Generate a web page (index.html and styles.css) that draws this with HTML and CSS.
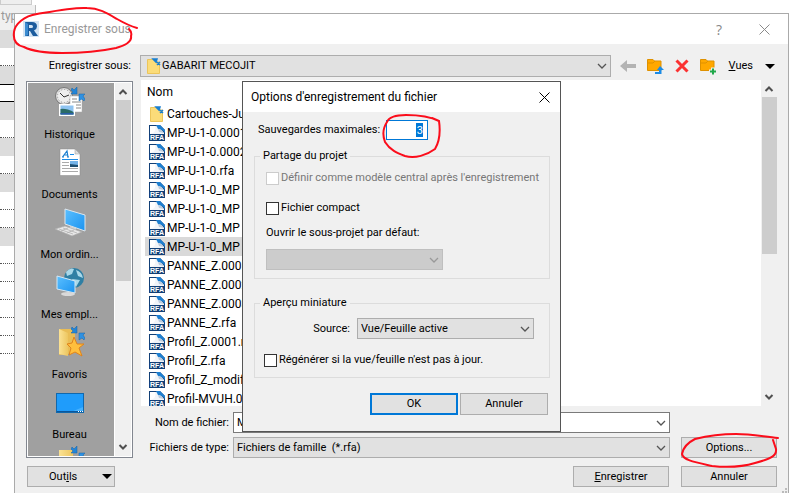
FILE: index.html
```
<!DOCTYPE html>
<html lang="fr">
<head>
    <meta charset="UTF-8">
    <meta name="viewport" content="width=device-width, initial-scale=1.0">
    <title>Enregistrer sous</title>
    <link rel="stylesheet" href="styles.css">
</head>
<body>
    <!-- shared icons -->
    <svg width="0" height="0" class="defs" aria-hidden="true">
        <defs>
            <linearGradient id="screen" x1="0" y1="0" x2="1" y2="1">
                <stop offset="0" stop-color="#5cc0ff"/>
                <stop offset="1" stop-color="#1b93f0"/>
            </linearGradient>
            <linearGradient id="folderFill" x1="0" y1="0" x2="1" y2="0">
                <stop offset="0" stop-color="#fbe294"/>
                <stop offset="1" stop-color="#edc660"/>
            </linearGradient>
            <symbol id="rfa" viewBox="0 0 16 16">
                <path d="M0 0H11L16 5V16H0Z" fill="#123f76"/>
                <path d="M1 1H9L15 8V9H1Z" fill="#f1f4f8"/>
                <path d="M1 9C6 8 7 5 6 1H1Z" fill="#fff"/>
                <path d="M7 0H11L16 5V8C14 5 11 4 9 4Z" fill="#1e7fd0"/>
                <path d="M9 4C11 4 13 5 15 8L10 7Z" fill="#bccbdc"/>
                <text x="8" y="15" text-anchor="middle" class="rfa-text">RFA</text>
            </symbol>
            <symbol id="folder" viewBox="0 0 16 16">
                <path d="M1.500 1.500H10V4H13.500V15.500H1.500Z" fill="#fbdc79" stroke="#ecc55a"/>
                <path d="M7 1L11 1L10 4ZM11 4L14 7M11 7L14 4" fill="#1a7fd0" stroke="#1a7fd0" stroke-width="1.500"/>
            </symbol>
            <symbol id="chevron" viewBox="0 0 10 6">
                <path d="M1 1L5 5L9 1" fill="none" stroke="currentColor" stroke-width="1.3"/>
            </symbol>
            <symbol id="chevronBold" viewBox="0 0 10 6">
                <path d="M1.500 1L5 4.500L8.500 1" fill="none" stroke="currentColor" stroke-width="2"/>
            </symbol>
            <symbol id="arrows" viewBox="0 0 14 15">
                <path d="M1 1L3 3L6 0V7H0L2 5L0 3Z" fill="#2385d8" stroke="#1464ab" stroke-width=".5"/>
                <path d="M13 14L11 12L8 14V7H14L12 9L14 12Z" fill="#2f91e2" stroke="#1464ab" stroke-width=".5"/>
            </symbol>
        </defs>
    </svg>

    <!-- property table of the window behind -->
    <div class="backdrop">
        <div class="bd-tab"></div>
        <div class="bd-head">type</div>
        <div class="bd-row grey"></div>
        <div class="bd-row dotted"></div>
        <div class="bd-row grey line"></div>
        <div class="bd-row line short"></div>
        <div class="bd-row grey"></div>
        <div class="bd-row dotted"></div>
        <div class="bd-row grey"></div>
        <div class="bd-row dotted"></div>
        <div class="bd-row grey"></div>
        <div class="bd-row dotted"></div>
        <div class="bd-row dotted"></div>
        <div class="bd-row grey"></div>
        <div class="bd-row dotted"></div>
        <div class="bd-row dotted"></div>
        <div class="bd-row dotted"></div>
        <div class="bd-row dotted"></div>
        <div class="bd-row dotted"></div>
        <div class="bd-row dotted"></div>
    </div>

    <main class="dialog">
        <header class="titlebar">
            <svg class="logo" width="16" height="16" viewBox="0 0 16 16">
                <rect width="16" height="16" fill="#d3e4f3"/>
                <path d="M2 1H9Q14 1 14 5.500Q14 8 11 9.500L15 15H10L7 10H6V15H2Z" fill="#1b5c9e"/>
                <path d="M6 4H8.500Q10 4 10 5.500Q10 7 8.500 7H6Z" fill="#d3e4f3"/>
                <path d="M2 1L5 3V14L2 15Z" fill="#3a8bd0"/>
            </svg>
            <h1>Enregistrer sous</h1>
            <button class="plain help" aria-label="Aide">?</button>
            <button class="plain" aria-label="Fermer">
                <svg width="11" height="11" viewBox="0 0 11 11"><path d="M.5 .5L10.500 10.500M10.500 .5L.5 10.500" stroke="#8a8a8a"/></svg>
            </button>
        </header>

        <div class="content">
            <div class="lookin">
                <span class="lookin-label">Enregistrer sous:</span>
                <button class="combo" aria-label="Dossier">
                    <svg width="16" height="16"><use href="#folder"/></svg>
                    <span>GABARIT MECOJIT</span>
                    <svg class="chev" width="10" height="6"><use href="#chevron"/></svg>
                </button>
                <div class="tools">
                    <button class="plain" aria-label="Précédent">
                        <svg width="16" height="14" viewBox="0 0 16 14"><path d="M0 7L7 1V5H16V9H7V13Z" fill="#b3b3b3"/></svg>
                    </button>
                    <button class="plain" aria-label="Dossier parent">
                        <svg width="17" height="17" viewBox="0 0 17 17">
                            <path d="M.5 1.500H6L7.500 3H14V12.500H.5Z" fill="#ffa800" stroke="#df9100"/>
                            <path d="M1 5H6L8 3" fill="none" stroke="#df9100"/>
                            <path d="M13 8L17 12H14.500V16H8V14H12V12H10Z" fill="#1b8be6"/>
                        </svg>
                    </button>
                    <button class="plain" aria-label="Supprimer">
                        <svg width="14" height="14" viewBox="0 0 14 14"><path d="M1.500 1.500L12.500 12.500M12.500 1.500L1.500 12.500" stroke="#fb3232" stroke-width="3"/></svg>
                    </button>
                    <button class="plain" aria-label="Nouveau dossier">
                        <svg width="17" height="17" viewBox="0 0 17 17">
                            <path d="M.5 1.500H6L7.500 3H14V12.500H.5Z" fill="#ffa800" stroke="#df9100"/>
                            <path d="M1 5H6L8 3" fill="none" stroke="#df9100"/>
                            <path d="M9 13.500H17M13 9.500V17" stroke="#f0f0f0" stroke-width="4"/>
                            <path d="M10 13.500H16M13 10.500V16.500" stroke="#20a84a" stroke-width="2"/>
                        </svg>
                    </button>
                    <button class="plain views"><span><u>V</u>ues</span><i class="caret"></i></button>
                </div>
            </div>

            <div class="main">
                <nav class="places">
                    <ul>
                        <li>
                            <svg width="32" height="32" viewBox="0 0 32 32">
                                <circle cx="10" cy="10" r="8.500" fill="#ddd" stroke="#777"/>
                                <circle cx="10" cy="10" r="6.500" fill="#eee" stroke="#999" stroke-dasharray="1 2"/>
                                <path d="M6 7L10 11L15 9" fill="none" stroke="#333"/>
                                <path d="M16 10H28V26H16Z" fill="#fff" stroke="#aaa" stroke-width=".5"/>
                                <path d="M18 13H23M18 16H27M22 19H27M22 22H27" stroke="#888"/>
                                <use href="#arrows" x="17" y="1" width="14" height="15"/>
                                <rect x="5" y="18" width="16" height="12" fill="#fff"/>
                                <rect x="6.500" y="19.500" width="13" height="9" fill="#8fc4f2"/>
                                <path d="M6.500 23Q12 22 19.500 26V28.500H6.500Z" fill="#2a6b67"/>
                                <path d="M6.500 27H19.500V28.500H6.500Z" fill="#2b5eaa"/>
                            </svg>
                            <a href="#">Historique</a>
                        </li>
                        <li>
                            <svg width="32" height="32" viewBox="0 0 32 32">
                                <path d="M6 3H21L26 8V29.500H6Z" fill="#fff" stroke="#888" stroke-width=".5"/>
                                <path d="M21 3V8H26Z" fill="#ddd" stroke="#999" stroke-width=".5"/>
                                <path d="M8.500 11L13 5L14 11M10 9H14M8 11H10M13 11H15" fill="none" stroke="#1b7fd0" stroke-width="1.200"/>
                                <path d="M16 8.500H20M8 13.500H24" stroke="#1b8be6"/>
                                <path d="M8 16.500H15M8 19.500H15M8 22.500H24M8 25.500H24" stroke="#aaa"/>
                                <rect x="16" y="15" width="8" height="6" fill="#74b3e8"/>
                                <path d="M16 18L24 19V21H16Z" fill="#1d4e70"/>
                            </svg>
                            <a href="#">Documents</a>
                        </li>
                        <li>
                            <svg width="32" height="32" viewBox="0 0 32 32">
                                <path d="M11 3L31 9V25L11 18Z" fill="url(#screen)" stroke="#dfe6ec"/>
                                <path d="M16 20L22 22V26L15 24Z" fill="#d5d5d5"/>
                                <path d="M1 23L11 20L28 26L18 30Z" fill="#e8e8e8" stroke="#aaa" stroke-width=".7"/>
                                <path d="M5 23L19 28M9 22L23 27M7 25L14 22M13 27L20 24" stroke="#aaa" stroke-width=".7"/>
                            </svg>
                            <a href="#">Mon ordin...</a>
                        </li>
                        <li>
                            <svg width="32" height="32" viewBox="0 0 32 32">
                                <circle cx="20" cy="12" r="10" fill="#2f7fa4"/>
                                <path d="M12 6Q16 1 20 3L18 8L13 10ZM22 4Q28 6 29 12L24 10ZM18 13L26 14L22 21Z" fill="#a9d8e9"/>
                                <path d="M3 10L21 15V27L3 23Z" fill="url(#screen)" stroke="#d3e8f5"/>
                                <ellipse cx="14" cy="28" rx="7" ry="2" fill="#d9d9d9"/>
                            </svg>
                            <a href="#">Mes empl...</a>
                        </li>
                        <li>
                            <svg width="32" height="32" viewBox="0 0 32 32">
                                <path d="M5 3H19V7H21V27L5 29Z" fill="#e9bd55"/>
                                <path d="M5 3L14 7V30L5 28Z" fill="url(#folderFill)"/>
                                <use href="#arrows" x="17" y="0" width="14" height="15"/>
                                <path d="M20 11L23 18L30 18L25 22L28 30L21 26L15 29L17 22L13 18L18 17Z" fill="#ffbf3d" stroke="#e0831b"/>
                            </svg>
                            <a href="#">Favoris</a>
                        </li>
                        <li>
                            <svg width="32" height="32" viewBox="0 0 32 32">
                                <rect x="2.500" y="7.500" width="27" height="19" fill="#1f9cfb" stroke="#1068ad"/>
                                <path d="M29 8V21L17 26H29Z" fill="#45b2ff"/>
                                <path d="M3 25.500H29" stroke="#0b569b"/>
                                <path d="M24 25.500H29" stroke="#fff" stroke-dasharray="1 1"/>
                            </svg>
                            <a href="#">Bureau</a>
                        </li>
                        <li>
                            <svg width="32" height="32" viewBox="0 0 32 32">
                                <path d="M5 4H19V26H5Z" fill="url(#folderFill)"/>
                                <use href="#arrows" x="17" y="0" width="14" height="15"/>
                            </svg>
                        </li>
                    </ul>
                    <div class="scrollbar">
                        <svg class="up" width="10" height="6"><use href="#chevronBold"/></svg>
                        <div class="thumb"></div>
                        <svg width="10" height="6"><use href="#chevronBold"/></svg>
                    </div>
                </nav>

                <div class="right">
                    <section class="files">
                        <div class="list">
                            <div class="list-head">Nom</div>
                            <ul>
                                <li><svg width="16" height="16"><use href="#folder"/></svg>Cartouches-Ju</li>
                                <li><svg width="16" height="16"><use href="#rfa"/></svg>MP-U-1-0.0001</li>
                                <li><svg width="16" height="16"><use href="#rfa"/></svg>MP-U-1-0.0002</li>
                                <li><svg width="16" height="16"><use href="#rfa"/></svg>MP-U-1-0.rfa</li>
                                <li><svg width="16" height="16"><use href="#rfa"/></svg>MP-U-1-0_MP</li>
                                <li><svg width="16" height="16"><use href="#rfa"/></svg>MP-U-1-0_MP</li>
                                <li><svg width="16" height="16"><use href="#rfa"/></svg>MP-U-1-0_MP</li>
                                <li class="selected"><svg width="16" height="16"><use href="#rfa"/></svg>MP-U-1-0_MP</li>
                                <li><svg width="16" height="16"><use href="#rfa"/></svg>PANNE_Z.0001</li>
                                <li><svg width="16" height="16"><use href="#rfa"/></svg>PANNE_Z.0002</li>
                                <li><svg width="16" height="16"><use href="#rfa"/></svg>PANNE_Z.0003</li>
                                <li><svg width="16" height="16"><use href="#rfa"/></svg>PANNE_Z.rfa</li>
                                <li><svg width="16" height="16"><use href="#rfa"/></svg>Profil_Z.0001.rfa</li>
                                <li><svg width="16" height="16"><use href="#rfa"/></svg>Profil_Z.rfa</li>
                                <li><svg width="16" height="16"><use href="#rfa"/></svg>Profil_Z_modif</li>
                                <li><svg width="16" height="16"><use href="#rfa"/></svg>Profil-MVUH.0</li>
                            </ul>
                        </div>
                        <div class="scrollbar">
                            <svg class="up" width="10" height="6"><use href="#chevronBold"/></svg>
                            <div class="thumb"></div>
                            <svg width="10" height="6"><use href="#chevronBold"/></svg>
                        </div>
                    </section>

                    <div class="fields">
                        <label for="filename">Nom de fichier:</label>
                        <div class="select-wrap">
                            <input id="filename" type="text" value="MP">
                            <svg class="chev" width="10" height="6"><use href="#chevron"/></svg>
                        </div>
                        <label class="type-label" for="filetype">Fichiers de type:</label>
                        <div class="select-wrap">
                            <select id="filetype"><option>Fichiers de famille&nbsp; (*.rfa)</option></select>
                            <svg class="chev" width="10" height="6"><use href="#chevron"/></svg>
                        </div>
                        <button class="btn">Options...</button>
                    </div>
                </div>
            </div>

            <footer class="actions">
                <button class="btn menu"><span>Out<u>i</u>ls</span><i class="caret"></i></button>
                <button class="btn save"><span><u>E</u>nregistrer</span></button>
                <button class="btn">Annuler</button>
            </footer>
        </div>
        <svg class="grip" width="6" height="5" viewBox="0 0 6 5"><path d="M4 0H6V2H4ZM1 3H3V5H1ZM4 3H6V5H4Z" fill="#bbb"/></svg>
    </main>

    <div class="modal" role="dialog" aria-labelledby="modalTitle">
        <header class="modal-title">
            <h2 id="modalTitle">Options d'enregistrement du fichier</h2>
            <button class="plain" aria-label="Fermer">
                <svg width="11" height="11" viewBox="0 0 11 11"><path d="M.5 .5L10.500 10.500M10.500 .5L.5 10.500" stroke="#000"/></svg>
            </button>
        </header>
        <form class="modal-body">
            <div class="backups">
                <label for="backups">Sauvegardes maximales:</label>
                <span class="spin"><input id="backups" type="text" value="3"></span>
            </div>
            <fieldset class="sharing">
                <legend>Partage du projet</legend>
                <label class="check off"><input type="checkbox" disabled>Définir comme modèle central après l'enregistrement</label>
                <label class="check"><input type="checkbox">Fichier compact</label>
                <label for="workset">Ouvrir le sous-projet par défaut:</label>
                <div class="select-wrap off">
                    <select id="workset" disabled><option></option></select>
                    <svg class="chev" width="10" height="6"><use href="#chevron"/></svg>
                </div>
            </fieldset>
            <fieldset class="preview">
                <legend>Aperçu miniature</legend>
                <div class="source">
                    <label for="source">Source:</label>
                    <div class="select-wrap">
                        <select id="source"><option>Vue/Feuille active</option></select>
                        <svg class="chev" width="10" height="6"><use href="#chevron"/></svg>
                    </div>
                </div>
                <label class="check"><input type="checkbox">Régénérer si la vue/feuille n'est pas à jour.</label>
            </fieldset>
            <div class="modal-actions">
                <button type="button" class="btn default">OK</button>
                <button type="button" class="btn">Annuler</button>
            </div>
        </form>
    </div>

    <!-- red pen marks -->
    <svg class="mark mark-title" width="130" height="50" viewBox="0 0 130 50">
        <path d="M125 23C118 21 112 18 105 14C95 8 87 3 75 3C62 2 42 6 25 9C12 11 3 19 2 27C1 34 3 40 12 42C20 46 32 48 50 48C72 48 90 46 104 43C115 40 120 36 119 31C120 28 119 26 117 24"/>
    </svg>
    <svg class="mark mark-count" width="62" height="48" viewBox="0 0 62 48">
        <path d="M58 9C48 4 38 3 25 3C14 3 8 5 6 10C2 16 1 22 4 30C9 38 16 41 24 44C34 47 46 43 54 37C60 27 59 16 58 9L51 6"/>
    </svg>
    <svg class="mark mark-options" width="100" height="40" viewBox="0 0 100 40">
        <path d="M98 6C85 5 72 2 56 2C44 2 27 4 15 7C7 11 3 16 2 22C3 28 14 30 32 34C50 36 65 34 75 31C90 27 97 24 96 17L93 8"/>
    </svg>
</body>
</html>
```
FILE: styles.css
```
* {
    box-sizing: border-box;
}
body {
    margin: 0;
    height: 100vh;
    overflow: hidden;
    position: relative;
    display: flex;
    background-color: white;
    color: #000;
    font-family: Roboto, Tahoma, sans-serif;
    font-size: 11px;
    line-height: 14px;
}
h1, h2, ul {
    margin: 0;
    padding: 0;
    font-weight: normal;
    list-style: none;
}
svg {
    flex: none;
    display: block;
}
.defs {
    position: absolute;
}
button, input, select {
    font: inherit;
    color: inherit;
    margin: 0;
}
.rfa-text {
    font: bold 7px "Liberation Sans", sans-serif;
    fill: #fff;
}

/* window behind */
.backdrop {
    width: 14px;
    flex: none;
    white-space: nowrap;
}
.bd-tab {
    width: 32px;
    height: 5px;
    background-color: #eee;
    border: 1px solid #ccc;
    border-top: none;
}
.bd-head {
    width: 36px;
    height: 25px;
    padding: 4px 0 0 1px;
    background-color: #f0f0f0;
    border-right: 1px solid #bbb;
    color: #999;
    font-size: 12px;
}
.bd-row {
    height: 18px;
    background-color: white;
}
.bd-row.grey {
    background-color: #dcdcdc;
}
.bd-row.dotted {
    border-bottom: 1px dotted #555;
}
.bd-row.line {
    height: 19px;
    border-bottom: 1px solid #000;
}
.bd-row.short {
    height: 17px;
}

/* main dialog */
.dialog {
    flex: 1;
    min-width: 0;
    margin-top: 13px;
    display: flex;
    flex-direction: column;
    position: relative;
    background-color: #f0f0f0;
    border: 1px solid #aaa;
    border-bottom: none;
}
.grip {
    position: absolute;
    right: 1px;
    bottom: 0;
}
.titlebar {
    height: 30px;
    flex: none;
    display: flex;
    align-items: center;
    padding: 0 18px 0 8px;
    background-color: white;
    color: #999;
}
.titlebar h1 {
    flex: 1;
    margin-left: 5px;
    font-size: 12px;
}
.plain {
    padding: 0;
    border: none;
    background: none;
    display: flex;
    align-items: center;
}
.help {
    margin-right: 37px;
    font: 14px "Open Sans", sans-serif;
    color: #888;
}
.content {
    flex: 1;
    min-height: 0;
    display: flex;
    flex-direction: column;
    padding: 11px 11px 6px;
}
.lookin {
    display: flex;
    align-items: center;
    height: 22px;
    flex: none;
    margin-bottom: 3px;
}
.lookin-label {
    width: 105px;
    margin-right: 9px;
    text-align: right;
    white-space: nowrap;
}
.combo {
    flex: 1;
    height: 22px;
    display: flex;
    align-items: center;
    padding: 0 3px 0 5px;
    border: 1px solid #adadad;
    background-color: #e1e1e1;
}
.combo .chev {
    margin-left: auto;
}
.tools {
    width: 166px;
    display: flex;
    align-items: center;
    justify-content: space-between;
    padding: 0 2px 0 9px;
}
.views {
    gap: 12px;
}
.caret {
    border: 5px solid transparent;
    border-top-color: #000;
    border-bottom: none;
}
.chev {
    color: #555;
}
.main {
    flex: 1;
    min-height: 0;
    display: flex;
    gap: 8px;
}
.places {
    width: 107px;
    flex: none;
    display: flex;
    margin-top: 1px;
    border: 1px solid #828790;
    background-color: white;
    padding: 1px;
}
.places ul {
    flex: 1;
    margin-right: 1px;
    overflow: hidden;
    background-color: #a0a0a0;
}
.places li {
    height: 60px;
    display: flex;
    flex-direction: column;
    align-items: center;
    gap: 10px;
    padding: 3px 3px 0 0;
}
.places a {
    color: #000;
    text-decoration: none;
}
.scrollbar {
    width: 16px;
    flex: none;
    display: flex;
    flex-direction: column;
    align-items: center;
    padding: 6px 0;
    gap: 5px;
    background-color: #f0f0f0;
    color: #505050;
}
.scrollbar .up {
    transform: rotate(180deg);
}
.thumb {
    width: 15px;
    height: 50%;
    margin-bottom: auto;
    background-color: #cdcdcd;
}
.right {
    flex: 1;
    min-width: 0;
    display: flex;
    flex-direction: column;
}
.files {
    flex: 1;
    min-height: 0;
    display: flex;
}
.list {
    flex: 1;
    overflow: hidden;
    background-color: white;
    padding-left: 4px;
    font-size: 12px;
    line-height: 20px;
}
.list-head {
    height: 24px;
    padding: 2px;
}
.list li {
    width: 50%;
    height: 19px;
    display: flex;
    align-items: center;
    gap: 2px;
    padding-left: 4px;
}
.list li.selected {
    background-color: #d9d9d9;
}
.fields {
    display: grid;
    grid-template-columns: 88px 1fr 96px;
    column-gap: 4px;
    row-gap: 4px;
    align-items: center;
    padding-top: 6px;
}
.fields label {
    text-align: right;
    white-space: nowrap;
}
.fields .type-label {
    grid-column: 1;
}
.fields .select-wrap {
    margin-right: 7px;
}
.fields .btn {
    grid-column: 3;
}
.select-wrap {
    position: relative;
}
.select-wrap select, .select-wrap input {
    display: block;
    width: 100%;
    height: 21px;
    padding: 0 3px;
    border: 1px solid #adadad;
    border-radius: 0;
    background-color: #e1e1e1;
    appearance: none;
}
.select-wrap input {
    background-color: white;
    border-color: #7a7a7a;
}
.select-wrap .chev {
    position: absolute;
    right: 4px;
    top: 8px;
}
.select-wrap.off select {
    background-color: #ccc;
    border-color: #bfbfbf;
    opacity: 1;
}
.select-wrap.off .chev {
    color: #999;
}
.btn {
    width: 96px;
    height: 21px;
    padding: 0;
    border: 1px solid #adadad;
    background-color: #e1e1e1;
}
.actions {
    flex: none;
    display: flex;
    gap: 12px;
    padding-top: 8px;
}
.menu {
    width: 88px;
    display: flex;
    align-items: center;
    justify-content: space-between;
    padding: 0 2px 0 21px;
    margin-left: 1px;
}
.save {
    margin-left: auto;
}

/* options dialog, over the main one */
.modal {
    position: absolute;
    left: 242px;
    top: 81px;
    width: 319px;
    background-color: #f0f0f0;
    border: 1px solid #555;
}
.modal-title {
    height: 30px;
    display: flex;
    align-items: center;
    justify-content: space-between;
    padding: 0 10px 0 8px;
    background-color: white;
}
.modal-title h2 {
    font-size: 12px;
}
.modal-body {
    padding: 8px 10px 16px 11px;
}
.backups {
    display: flex;
    align-items: center;
    padding-left: 4px;
}
.backups label {
    width: 128px;
    white-space: nowrap;
}
.spin input {
    display: block;
    width: 42px;
    height: 20px;
    padding: 0 4px;
    border: 1px solid #0078d7;
    text-align: right;
    background: linear-gradient(#0078d7, #0078d7) no-repeat right 4px center / 7px 14px white;
    color: white;
}
fieldset {
    min-width: 0;
    margin: 0;
    border: 1px solid #dcdcdc;
    padding: 0 11px;
}
legend {
    padding: 0 3px;
    margin-left: -6px;
}
.sharing {
    margin-top: 9px;
    padding-bottom: 8px;
}
.preview {
    margin-top: 17px;
    padding: 0 9px 2px;
}
.preview legend {
    margin-left: -4px;
}
.check {
    display: flex;
    align-items: center;
    gap: 2px;
    height: 30px;
    white-space: nowrap;
}
.check input {
    appearance: none;
    width: 13px;
    height: 13px;
    margin: 0;
    flex: none;
    border: 1px solid #333;
    background-color: white;
}
.check.off {
    color: #777;
}
.check.off input {
    border-color: #ccc;
}
.sharing > label[for] {
    display: block;
    padding: 3px 0 9px;
}
.sharing .select-wrap, .source .select-wrap {
    width: 177px;
}
.source {
    display: flex;
    align-items: center;
    justify-content: flex-end;
    gap: 7px;
    padding: 8px 6px 6px 0;
}
.modal-actions {
    display: flex;
    justify-content: flex-end;
    gap: 2px;
    margin: 15px 2px 0 0;
}
.modal-actions .btn {
    width: 88px;
    height: 22px;
}
.btn.default {
    border: 2px solid #0078d7;
}

.mark {
    position: absolute;
    fill: none;
    stroke: #fb0d1b;
    stroke-width: 2;
    stroke-linecap: round;
    stroke-linejoin: round;
    pointer-events: none;
}
.mark-title {
    left: 12px;
    top: 5px;
}
.mark-count {
    left: 381px;
    top: 112px;
}
.mark-options {
    left: 680px;
    top: 432px;
}
```
